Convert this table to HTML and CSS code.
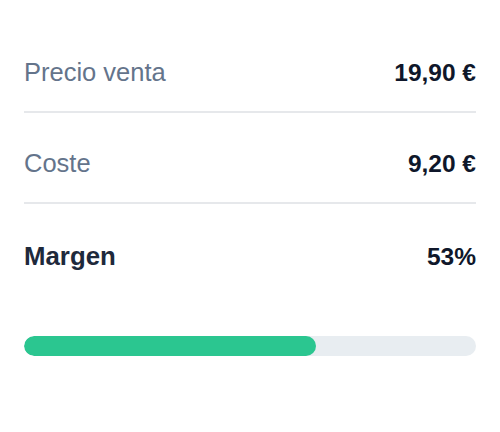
FILE: index.html
```html
<!DOCTYPE html>
<html lang="es">
<head>
<meta charset="utf-8">
<link rel="stylesheet" href="styles.css">
</head>
<body>
<div class="card">
  <div class="row">
    <span class="label">Precio venta</span>
    <span class="value">19,90 €</span>
  </div>
  <div class="row">
    <span class="label">Coste</span>
    <span class="value">9,20 €</span>
  </div>
  <div class="row total">
    <span class="label">Margen</span>
    <span class="value">53%</span>
  </div>
  <div class="track"><div class="fill" style="width: 64.6%"></div></div>
</div>
</body>
</html>
```
FILE: styles.css
```css
html, body {
  margin: 0;
  padding: 0;
  background: #ffffff;
}
body {
  font-family: "Liberation Sans", Arial, sans-serif;
}
.card {
  padding: 22px 24px;
  display: flex;
  flex-direction: column;
}
.row {
  display: flex;
  justify-content: space-between;
  align-items: baseline;
  padding: 35px 0 23px;
  line-height: 30px;
  border-bottom: 2px solid #e6e8eb;
}
.label {
  font-size: 25.5px;
  color: #64748b;
}
.value {
  font-size: 24.5px;
  font-weight: 700;
  color: #0f172a;
}
.row.total {
  border-bottom: none;
  padding-top: 37px;
}
.row.total .label {
  font-size: 25.8px;
  font-weight: 700;
  color: #1e293b;
}
.track {
  margin-top: 41px;
  height: 20px;
  border-radius: 10px;
  background: #e8edf1;
  overflow: hidden;
}
.fill {
  height: 100%;
  border-radius: 10px;
  background: #2bc690;
}
```
